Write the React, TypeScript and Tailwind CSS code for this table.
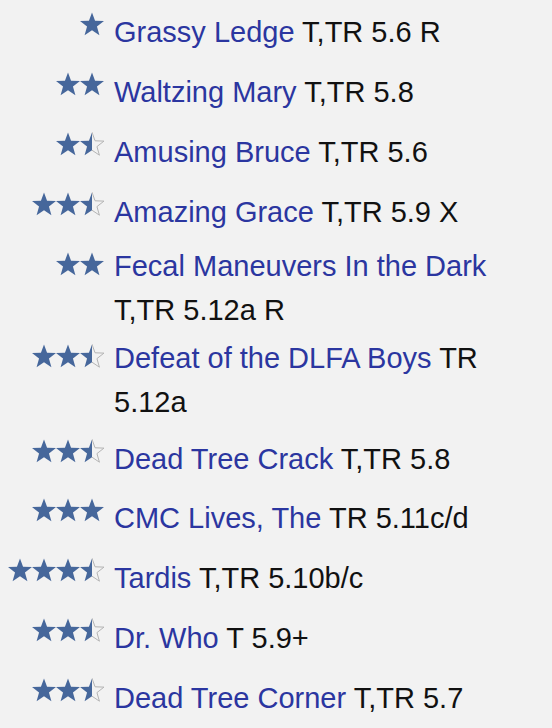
import { useId } from "react";

type Route = {
  name: string;
  grade: string;
  stars: number;
  wrap?: boolean;
  gap: string;
};

const routes: Route[] = [
  { name: "Grassy Ledge", grade: "T,TR 5.6 R", stars: 1, gap: "mt-0" },
  { name: "Waltzing Mary", grade: "T,TR 5.8", stars: 2, gap: "mt-[16px]" },
  { name: "Amusing Bruce", grade: "T,TR 5.6", stars: 1.5, gap: "mt-[16px]" },
  { name: "Amazing Grace", grade: "T,TR 5.9 X", stars: 2.5, gap: "mt-[16px]" },
  { name: "Fecal Maneuvers In the Dark", grade: "T,TR 5.12a R", stars: 2, wrap: true, gap: "mt-[10px]" },
  { name: "Defeat of the DLFA Boys", grade: "TR\n5.12a", stars: 2.5, wrap: true, gap: "mt-[4px]" },
  { name: "Dead Tree Crack", grade: "T,TR 5.8", stars: 2.5, gap: "mt-[13px]" },
  { name: "CMC Lives, The", grade: "TR 5.11c/d", stars: 3, gap: "mt-[15px]" },
  { name: "Tardis", grade: "T,TR 5.10b/c", stars: 3.5, gap: "mt-[16px]" },
  { name: "Dr. Who", grade: "T 5.9+", stars: 2.5, gap: "mt-[16px]" },
  { name: "Dead Tree Corner", grade: "T,TR 5.7", stars: 2.5, gap: "mt-[16px]" },
];

const STAR =
  "12,0.4 15.06,8.79 23.98,9.11 16.95,14.61 19.41,23.19 12,18.2 4.59,23.19 7.05,14.61 0.02,9.11 8.94,8.79";

function Star({ half }: { half?: boolean }) {
  const id = useId().replace(/:/g, "");
  if (!half) {
    return (
      <svg width="24" height="24" viewBox="0 0 24 24">
        <polygon points={STAR} fill="#46679b" />
      </svg>
    );
  }
  return (
    <svg width="24" height="24" viewBox="0 0 24 24">
      <defs>
        <clipPath id={`l${id}`}>
          <rect x="0" y="0" width="12" height="24" />
        </clipPath>
        <clipPath id={`r${id}`}>
          <rect x="12" y="0" width="12" height="24" />
        </clipPath>
      </defs>
      <polygon points={STAR} fill="#46679b" clipPath={`url(#l${id})`} />
      <polygon
        points={STAR}
        fill="none"
        stroke="#b4b4b4"
        strokeWidth="1"
        clipPath={`url(#r${id})`}
      />
    </svg>
  );
}

function Stars({ n }: { n: number }) {
  const full = Math.floor(n);
  const half = n % 1 !== 0;
  return (
    <div className="flex">
      {Array.from({ length: full }).map((_, i) => (
        <Star key={i} />
      ))}
      {half && <Star half />}
    </div>
  );
}

export default function App() {
  return (
    <div
      className="min-h-screen bg-[#f2f2f2] pt-[10px] text-[29px] leading-[44px] text-[#111]"
      style={{ fontFamily: '"Liberation Sans", Arial, sans-serif' }}
    >
      {routes.map((r) => {
        const [first, second] = r.grade.split("\n");
        return (
          <div key={r.name} className={`flex items-start ${r.gap}`}>
            <div className={`flex w-[104px] shrink-0 justify-end ${r.wrap ? "mt-[8px]" : "mt-[2px]"}`}>
              <Stars n={r.stars} />
            </div>
            <div className="ml-[10px] whitespace-nowrap">
              <a href="#" className="text-[#2b36a0]">
                {r.name}
              </a>
              {r.wrap ? (
                second !== undefined ? (
                  <>
                    {" "}
                    {first}
                    <br />
                    {second}
                  </>
                ) : (
                  <>
                    <br />
                    {first}
                  </>
                )
              ) : (
                <> {first}</>
              )}
            </div>
          </div>
        );
      })}
    </div>
  );
}
